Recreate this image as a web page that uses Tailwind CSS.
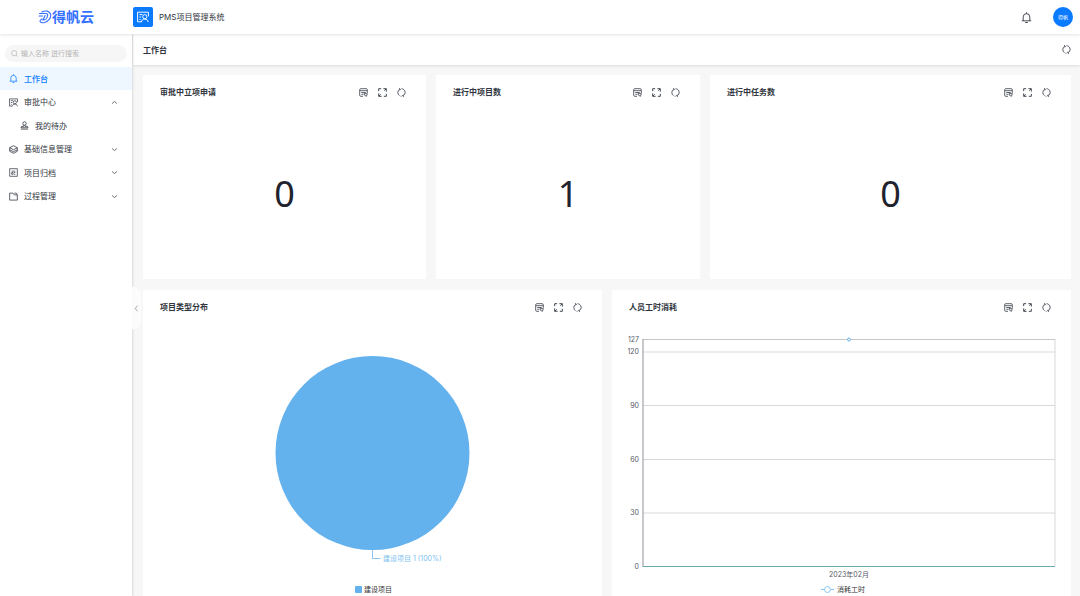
<!DOCTYPE html>
<html lang="zh-CN">
<head>
<meta charset="utf-8">
<title>PMS项目管理系统</title>
<script src="https://cdn.jsdelivr.net/npm/@tailwindcss/browser@4"></script>
</head>
<body class="flex h-screen flex-col overflow-hidden bg-[#f7f7f7] font-[Inter,'Noto_Sans_CJK_SC',sans-serif] text-[8px] leading-3 text-[#303540]">
<svg class="hidden" aria-hidden="true">
  <symbol id="note" viewBox="0 0 20 20" fill="none" stroke="currentColor" stroke-width="1.7"><path d="M9 18.500H4a2.500 2.500 0 0 1-2.500-2.500V4A2.500 2.500 0 0 1 4 1.500h12A2.500 2.500 0 0 1 18.500 4v7M2 6h16M5 10h10M5 14h4M11 12.500h7.500L16.500 18.500l-5-3z"/></symbol>
  <symbol id="full" viewBox="0 0 20 20" fill="none" stroke="currentColor" stroke-width="2"><path d="M1.500 7V1.500H7M12 1.500h6.500V8M18.500 13v5.500H13M8 18.500H1.500V12M14 6l4-4M2 18l4-4"/></symbol>
  <symbol id="sync" viewBox="0 0 20 20" fill="none" stroke="currentColor" stroke-width="1.800"><path d="M5.500 17A8.500 8.500 0 0 1 6 2.700M10 1.500A8.500 8.500 0 0 1 14.500 3A8.500 8.500 0 0 1 14 17.300M10 18.500A8.500 8.500 0 0 1 8 18.200M4.500 1l3 1.500-1.500 3M15.500 19l-3-1.500 1.500-3"/></symbol>
  <symbol id="bell" viewBox="0 0 20 20" fill="none" stroke="currentColor" stroke-width="1.600"><path d="M1.500 16h17M4 16V9a6 6 0 0 1 12 0v7M10 3V.500M7.500 19h5"/></symbol>
  <symbol id="card" viewBox="0 0 20 20" fill="none" stroke="currentColor" stroke-width="1.600"><path d="M19 9V2H1v16h6M4 6h5M4 10h3M4 14h2M7.500 18.500c0-3 2-5 5.500-5s5.500 2 5.500 5"/><circle cx="13" cy="9.500" r="3.500"/></symbol>
  <symbol id="person" viewBox="0 0 20 20" fill="none" stroke="currentColor" stroke-width="1.700"><circle cx="10" cy="5.500" r="3.800"/><path d="M8.500 9v3H3.500L2 15h16l-1.500-3h-5V9M2 18h16"/></symbol>
  <symbol id="layers" viewBox="0 0 20 20" fill="none" stroke="currentColor" stroke-width="1.700"><path d="M10 1.500l8.500 4.500-8.500 4.500L1.500 6zM1.500 6v8l8.500 4.500 8.500-4.500V6M1.500 10.500L10 15l8.500-4.500"/></symbol>
  <symbol id="archive" viewBox="0 0 20 20" fill="none" stroke="currentColor" stroke-width="1.600"><path d="M1.500 1.500h17v17h-17zM6 7h8M6 10h3v4H6zM11 10h3M11 14h3"/></symbol>
  <symbol id="folder" viewBox="0 0 20 20" fill="none" stroke="currentColor" stroke-width="1.700"><path d="M1.500 18V2.500H9l3 4h6.500V18zM12 2.500h4l2.500 4"/></symbol>
  <symbol id="down" viewBox="0 0 20 20" fill="none" stroke="currentColor" stroke-width="2"><path d="M3 7l7 6 7-6"/></symbol>
  <symbol id="up" viewBox="0 0 20 20" fill="none" stroke="currentColor" stroke-width="2"><path d="M3 13l7-6 7 6"/></symbol>
</svg>

<header class="relative z-20 flex h-[34px] shrink-0 items-center bg-white pr-[7px] shadow-[0_1px_3px_rgba(0,21,41,0.12)]">
  <a href="#" class="flex w-[132px] items-center justify-center text-[14px] font-bold leading-4 text-[#3370ff]">
    <svg class="h-[14px] w-[14px]" viewBox="0 0 28 28" fill="none" stroke="currentColor" stroke-width="2.200" stroke-linecap="round"><path d="M3 7h13c3 0 4 2 3 5-1 5-5 8-9 8l4-9M8 4c7-4 15-2 17 4 2 7-4 15-12 17-5 1-9 0-9-3 0-2 2-3 4-4M2 12h7"/></svg>得帆云</a>
  <svg class="ml-px h-5 w-5 rounded-xs bg-[#0a7aff] p-1 text-white"><use href="#card"/></svg>
  <h1 class="ml-1.5">PMS项目管理系统</h1>
  <button class="ml-auto" aria-label="通知"><svg class="size-[11px]"><use href="#bell"/></svg></button>
  <button class="ml-[21px] size-5 rounded-full bg-[#0a7aff] text-[5px] text-white">得帆</button>
</header>

<div class="flex min-h-0 flex-1">
  <aside class="relative z-10 w-[132px] shrink-0 bg-white shadow-[1px_0_2px_rgba(0,21,41,0.12)]">
    <label class="mx-[5px] mt-[11px] flex h-[17px] items-center gap-[3px] rounded-full bg-[#f6f6f6] px-1.5 text-[#b5b5b5]">
      <svg class="size-[7px] shrink-0" viewBox="0 0 20 20" fill="none" stroke="currentColor" stroke-width="2"><circle cx="9" cy="9" r="7.500"/><path d="M14.500 14.500L19 19"/></svg>
      <input type="text" aria-label="搜索" placeholder="输入名称 进行搜索" class="min-w-0 flex-1 bg-transparent text-[7px] outline-none placeholder:text-[#b5b5b5]">
    </label>
    <nav class="mt-[5px] flex h-[141px] flex-col justify-between">
      <a href="#" class="flex h-[23px] items-center gap-1.5 bg-[#eef6ff] pl-[9px] font-medium text-[#0a7aff]"><svg class="size-[9px]"><use href="#bell"/></svg>工作台</a>
      <a href="#" class="flex h-[23px] items-center gap-1.5 pl-[9px] pr-[14px]"><svg class="size-[9px]"><use href="#card"/></svg>审批中心<svg class="ml-auto size-[7px]"><use href="#up"/></svg></a>
      <a href="#" class="flex h-[23px] items-center gap-1.5 pl-5"><svg class="size-[9px]"><use href="#person"/></svg>我的待办</a>
      <a href="#" class="flex h-[23px] items-center gap-1.5 pl-[9px] pr-[14px]"><svg class="size-[9px]"><use href="#layers"/></svg>基础信息管理<svg class="ml-auto size-[7px]"><use href="#down"/></svg></a>
      <a href="#" class="flex h-[23px] items-center gap-1.5 pl-[9px] pr-[14px]"><svg class="size-[9px]"><use href="#archive"/></svg>项目归档<svg class="ml-auto size-[7px]"><use href="#down"/></svg></a>
      <a href="#" class="flex h-[23px] items-center gap-1.5 pl-[9px] pr-[14px]"><svg class="size-[9px]"><use href="#folder"/></svg>过程管理<svg class="ml-auto size-[7px]"><use href="#down"/></svg></a>
    </nav>
    <button aria-label="收起菜单" class="absolute left-full top-[253px] flex h-[42px] w-[9px] items-center justify-center rounded-r-lg bg-[#fcfcfc] text-[#999999]"><svg class="size-[7px]" viewBox="0 0 20 20" fill="none" stroke="currentColor" stroke-width="2.500"><path d="M13 2l-7 8 7 8"/></svg></button>
  </aside>

  <main class="min-w-0 flex-1 pl-px">
    <div class="flex h-[31px] items-center justify-between bg-white pl-[10px] pr-[9px] shadow-[0_1px_3px_rgba(0,21,41,0.12)]">
      <h2 class="font-bold">工作台</h2>
      <button aria-label="刷新"><svg class="size-[9px]"><use href="#sync"/></svg></button>
    </div>

    <div class="mt-[10px] grid grid-cols-[283fr_264fr_361fr] gap-[10px] pl-[10px] pr-[9px]">
      <section class="h-[204px] bg-white">
        <div class="flex h-[34px] items-center gap-[10px] pl-[17px] pr-5"><h3 class="mr-auto font-bold">审批中立项申请</h3>
          <button aria-label="备注"><svg class="size-[9px]"><use href="#note"/></svg></button><button aria-label="全屏"><svg class="size-[9px]"><use href="#full"/></svg></button><button aria-label="刷新"><svg class="size-[9px]"><use href="#sync"/></svg></button></div>
        <p class="flex h-[170px] items-center justify-center font-['Noto_Sans',sans-serif] text-[36px] leading-none text-[#1f232e]">0</p>
      </section>
      <section class="h-[204px] bg-white">
        <div class="flex h-[34px] items-center gap-[10px] pl-[17px] pr-5"><h3 class="mr-auto font-bold">进行中项目数</h3>
          <button aria-label="备注"><svg class="size-[9px]"><use href="#note"/></svg></button><button aria-label="全屏"><svg class="size-[9px]"><use href="#full"/></svg></button><button aria-label="刷新"><svg class="size-[9px]"><use href="#sync"/></svg></button></div>
        <p class="flex h-[170px] items-center justify-center font-['Noto_Sans',sans-serif] text-[36px] leading-none text-[#1f232e]">1</p>
      </section>
      <section class="h-[204px] bg-white">
        <div class="flex h-[34px] items-center gap-[10px] pl-[17px] pr-5"><h3 class="mr-auto font-bold">进行中任务数</h3>
          <button aria-label="备注"><svg class="size-[9px]"><use href="#note"/></svg></button><button aria-label="全屏"><svg class="size-[9px]"><use href="#full"/></svg></button><button aria-label="刷新"><svg class="size-[9px]"><use href="#sync"/></svg></button></div>
        <p class="flex h-[170px] items-center justify-center font-['Noto_Sans',sans-serif] text-[36px] leading-none text-[#1f232e]">0</p>
      </section>
    </div>

    <div class="mt-[11px] grid grid-cols-2 gap-[10px] pl-[10px] pr-[9px]">
      <section class="bg-white">
        <div class="flex h-[34px] items-center gap-[10px] pl-[17px] pr-5"><h3 class="mr-auto font-bold">项目类型分布</h3>
          <button aria-label="备注"><svg class="size-[9px]"><use href="#note"/></svg></button><button aria-label="全屏"><svg class="size-[9px]"><use href="#full"/></svg></button><button aria-label="刷新"><svg class="size-[9px]"><use href="#sync"/></svg></button></div>
        <div class="flex justify-center">
          <svg class="h-[290px] w-[260px]" viewBox="0 0 260 290" role="img" aria-label="项目类型分布">
            <circle cx="129.500" cy="129" r="97" fill="#63b2ee"/>
            <path d="M129.500 226v8.500h8" fill="none" stroke="#8cc6f2"/>
            <text x="140" y="237" class="fill-[#7dbff1] text-[7px]">建设项目 1 (100%)</text>
            <rect x="112" y="262" width="7" height="7" rx="1" fill="#63b2ee"/>
            <text x="121" y="268" class="fill-[#333333] text-[7px]">建设项目</text>
          </svg>
        </div>
      </section>
      <section class="bg-white">
        <div class="flex h-[34px] items-center gap-[10px] pl-[17px] pr-5"><h3 class="mr-auto font-bold">人员工时消耗</h3>
          <button aria-label="备注"><svg class="size-[9px]"><use href="#note"/></svg></button><button aria-label="全屏"><svg class="size-[9px]"><use href="#full"/></svg></button><button aria-label="刷新"><svg class="size-[9px]"><use href="#sync"/></svg></button></div>
        <div class="pl-[31px] pr-4">
          <svg class="h-[290px] w-full overflow-visible" role="img" aria-label="人员工时消耗">
            <g stroke="#d9d9d9"><line x1="0" y1="28" x2="100%" y2="28"/><line x1="0" y1="81.500" x2="100%" y2="81.500"/><line x1="0" y1="135.500" x2="100%" y2="135.500"/><line x1="0" y1="189" x2="100%" y2="189"/><line x1="100%" y1="15" x2="100%" y2="242"/></g>
            <line x1="0" y1="15.500" x2="100%" y2="15.500" stroke="#c4c6c8"/>
            <line x1="0" y1="15" x2="0" y2="243" stroke="#8e9197"/>
            <line x1="0" y1="242.500" x2="100%" y2="242.500" stroke="#6aaab3"/>
            <circle cx="50%" cy="15.500" r="1.500" fill="white" stroke="#63b2ee"/>
            <g text-anchor="end" class="fill-[#555b66] text-[7px]"><text x="-4" y="18">127</text><text x="-4" y="30">120</text><text x="-4" y="84">90</text><text x="-4" y="138">60</text><text x="-4" y="191">30</text><text x="-4" y="245">0</text></g>
            <text x="50%" y="253" text-anchor="middle" class="fill-[#555b66] text-[7px]">2023年02月</text>
            <svg x="50%" y="260" class="overflow-visible"><path d="M-28 5.500h13" stroke="#8cc6f2"/><circle cx="-21.500" cy="5.500" r="3" fill="white" stroke="#8cc6f2"/><text x="-12" y="8" class="fill-[#333333] text-[7px]">消耗工时</text></svg>
          </svg>
        </div>
      </section>
    </div>
  </main>
</div>
</body>
</html>
